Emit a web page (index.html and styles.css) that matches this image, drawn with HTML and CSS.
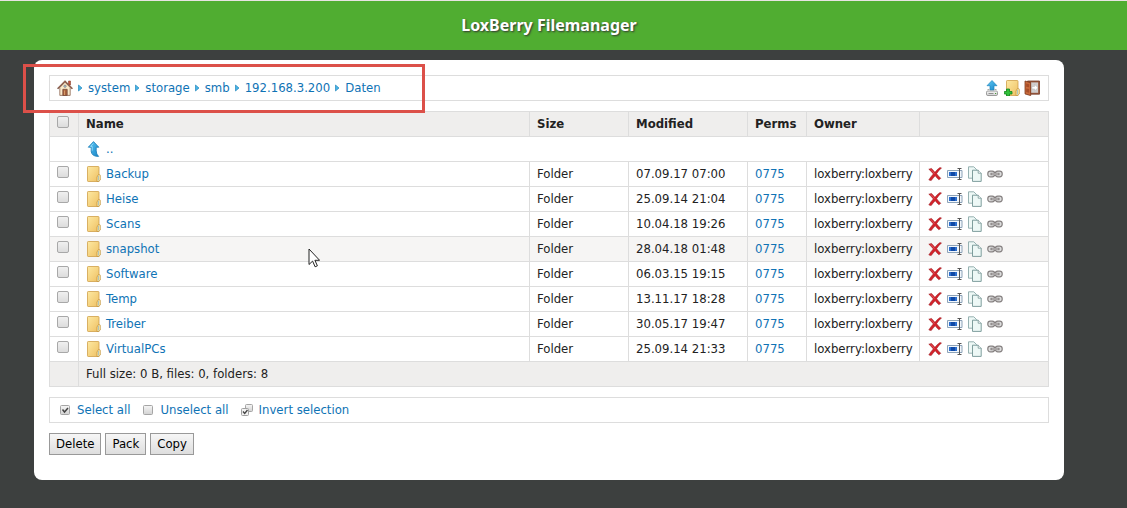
FILE: index.html
```html
<!DOCTYPE html>
<html lang="en">
<head>
  <meta charset="UTF-8">
  <meta name="viewport" content="width=device-width, initial-scale=1.0">
  <title>LoxBerry Filemanager</title>
  <link rel="stylesheet" href="styles.css">
</head>
<body>
  <!-- icon set -->
  <svg class="sprite" aria-hidden="true">
    <defs>
      <linearGradient id="g-folder" x1="0" y1="0" x2="1" y2="1">
        <stop offset="0" stop-color="#fde9a2"/><stop offset="1" stop-color="#efc062"/>
      </linearGradient>
      <linearGradient id="g-blue" x1="0" y1="0" x2="1" y2="1">
        <stop offset="0" stop-color="#5cc8f5"/><stop offset="1" stop-color="#1a86c8"/>
      </linearGradient>
      <linearGradient id="g-grey" x1="0" y1="0" x2="0" y2="1">
        <stop offset="0" stop-color="#f6f6f6"/><stop offset="1" stop-color="#d2d2d2"/>
      </linearGradient>
    </defs>
    <symbol id="home" viewBox="0 0 16 16">
      <path d="M11.5 1h2v4h-2z" fill="#c9543c" stroke="#8a4634" stroke-width=".6"/>
      <path d="M2.8 7.5L8 2.2l5.2 5.3v7.9H2.8z" fill="#faeacb" stroke="#8b6650" stroke-width=".8"/>
      <path d="M.6 8.8L8 1.3l7.4 7.5" fill="none" stroke="#6f4a3c" stroke-width="1.4"/>
      <path d="M1.2 8.2L8 1.4l6.8 6.8" fill="none" stroke="#c98a70" stroke-width=".6"/>
      <path d="M5.8 9.3h4.4v6.1H5.8z" fill="#a9623d" stroke="#6d4030" stroke-width=".7"/>
      <path d="M7 10.5h1v4.6H7z" fill="#d59a68"/>
      <circle cx="8" cy="6.2" r="1.2" fill="#9fc9e2" stroke="#7b5b4d" stroke-width=".5"/>
    </symbol>
    <symbol id="arrow" viewBox="0 0 5 8">
      <path d="M.5 1L4 4 .5 7z" fill="#49b4e6" stroke="#2588bd" stroke-width=".7"/>
    </symbol>
    <symbol id="upload" viewBox="0 0 16 16">
      <path d="M8 .5l5 5.200h-3V10H6V5.700H3z" fill="url(#g-blue)" stroke="#1e86bf" stroke-width=".7"/>
      <path d="M3.500 9.500h2M10.500 9.500h2" stroke="#aaa" stroke-width="1"/>
      <rect x="2.500" y="11" width="11" height="4.500" rx="1.300" fill="url(#g-grey)" stroke="#858585" stroke-width=".8"/>
      <path d="M4.500 13.500h5" stroke="#888" stroke-width=".9"/>
      <path d="M11 13.500h1.200" stroke="#4b9c3d" stroke-width="1"/>
    </symbol>
    <symbol id="folder" viewBox="0 0 16 16">
      <path d="M1.500 1.200q0-.7.7-.7h10.100q.7 0 .7.7v14.300H2.200q-.7 0-.7-.7z" fill="url(#g-folder)" stroke="#cfa049" stroke-width=".8"/>
      <path d="M11 15.500v-4.500l1.300-2.300h1.200q.8 0 .8.800v4.500l-1.800 1.500z" fill="#fbe7a5" stroke="#bf8f3b" stroke-width=".7"/>
      <path d="M12.500 10v4.500" stroke="#8fb6c1" stroke-width=".7"/>
    </symbol>
    <symbol id="newfolder" viewBox="0 0 16 16">
      <use href="#folder" width="16" height="16" x="1"/>
      <path d="M2.500 9h3v2.500H8v2.500H5.500v2h-3v-2H.3v-2.500h2.200z" fill="#2fc13a" stroke="#138320" stroke-width=".8"/>
    </symbol>
    <symbol id="door" viewBox="0 0 16 16">
      <path d="M3.500 1h12v13.200h-12z" fill="#9a5a3f" stroke="#743b27" stroke-width=".8"/>
      <path d="M7 2.400h7.100v10.400H7z" fill="#d0cece"/>
      <path d="M1 1l5.700 1.700v12.900L1 13.900z" fill="#c86a3b" stroke="#7b3a20" stroke-width=".8"/>
      <path d="M2.200 3.500l2.900.8v3l-2.900-.5zM2.200 8.500l2.900.5v3.700l-2.900-.8z" fill="#a84e29"/>
      <path d="M8 6.500h2.500V4.400L14 7.700 10.500 11V8.900H8z" fill="#fff" stroke="#aaa" stroke-width=".4"/>
    </symbol>
    <symbol id="up" viewBox="0 0 16 16">
      <path d="M7.500.6l5.300 5.600h-2.600v3.600q0 3.600 2.400 5.600-6.900.2-7.400-5.100V6.200H2.300z" fill="url(#g-blue)" stroke="#1479b5" stroke-width=".8"/>
      <path d="M7.300 2.500L4.600 5.400h1.600v4.300" fill="none" stroke="#a5e2fb" stroke-width=".8"/>
    </symbol>
    <symbol id="delete" viewBox="0 0 16 16">
      <path d="M1.800 3.200L4.500 2.400q1.500 1.400 3.400 3.900 2.500-3.300 5-4.700l1.600.3q-2.800 2.500-4.900 5.800 1.800 2.400 4.200 4.600l-1.900 1.500q-1.800-1.500-3.700-4-2.200 2.300-4 4.800l-2.400-.7q1.800-3 4.500-6-2-2.700-4.500-4.700z" fill="#d3222a" stroke="#941219" stroke-width=".5"/>
      <path d="M3.800 3.400q2 2 3.600 4.400" fill="none" stroke="#f0757a" stroke-width=".6"/>
    </symbol>
    <symbol id="rename" viewBox="0 0 16 16">
      <path d="M.5 4.500h14.500v7H.5z" fill="#f2f7fc" stroke="#8da3b8"/>
      <path d="M2 6h8v4H2z" fill="#2b6fd0"/>
      <path d="M4 6h4v4H4z" fill="#0f49a6"/>
      <path d="M12.500 3v10M10.500 2.500h4M10.500 13.500h4" fill="none" stroke="#555"/>
    </symbol>
    <symbol id="copy" viewBox="0 0 16 16">
      <path d="M1.500.8h5.300l2.700 2.700v8.700h-8z" fill="#eef8f6" stroke="#8ba9a9" stroke-width=".9"/>
      <path d="M5.500 4.200h5.700l3 3v8.200H5.500z" fill="#edf8f6" stroke="#729393" stroke-width=".9"/>
      <path d="M11.200 4.200v3h3" fill="#fff" stroke="#729393" stroke-width=".8"/>
    </symbol>
    <symbol id="link" viewBox="0 0 16 16">
      <rect x=".8" y="5.200" width="6.900" height="5.600" rx="2.500" fill="#ddd" stroke="#858080" stroke-width="1.200"/>
      <rect x="8.300" y="5.200" width="6.900" height="5.600" rx="2.500" fill="#ddd" stroke="#858080" stroke-width="1.200"/>
      <path d="M3.500 8h9" stroke="#7d7878" stroke-width="2.400"/>
      <path d="M4.500 8h7" stroke="#e0dede" stroke-width=".9"/>
    </symbol>
    <symbol id="checked" viewBox="0 0 16 16">
      <rect x="3.500" y="3.500" width="9" height="9" rx="1" fill="url(#g-grey)" stroke="#a5a5a5"/>
      <path d="M5.500 7.500l2 2.500 3.500-4" fill="none" stroke="#444" stroke-width="1.500"/>
    </symbol>
    <symbol id="unchecked" viewBox="0 0 16 16">
      <rect x="3.500" y="3.500" width="9" height="9" rx="1" fill="url(#g-grey)" stroke="#a5a5a5"/>
    </symbol>
    <symbol id="invert" viewBox="0 0 16 16">
      <rect x="6.500" y="2.500" width="7" height="7" rx="1" fill="url(#g-grey)" stroke="#a5a5a5"/>
      <rect x="2.500" y="6.500" width="7" height="7" rx="1" fill="#f2f2f2" stroke="#a0a0a0"/>
      <path d="M4 9.500l1.700 2L8.500 8" fill="none" stroke="#444" stroke-width="1.300"/>
    </symbol>
  </svg>

  <header class="header">
    <h1>LoxBerry Filemanager</h1>
  </header>

  <main class="card">
    <div class="bar">
      <nav class="crumbs">
        <a href="#" aria-label="Home"><svg class="icon"><use href="#home"/></svg></a>
        <svg class="sep"><use href="#arrow"/></svg>
        <a href="#">system</a>
        <svg class="sep"><use href="#arrow"/></svg>
        <a href="#">storage</a>
        <svg class="sep"><use href="#arrow"/></svg>
        <a href="#">smb</a>
        <svg class="sep"><use href="#arrow"/></svg>
        <a href="#">192.168.3.200</a>
        <svg class="sep"><use href="#arrow"/></svg>
        <a href="#">Daten</a>
      </nav>
      <div class="tools">
        <a href="#" aria-label="Upload"><svg class="icon"><use href="#upload"/></svg></a>
        <a href="#" aria-label="New folder"><svg class="icon"><use href="#newfolder"/></svg></a>
        <a href="#" aria-label="Logout"><svg class="icon"><use href="#door"/></svg></a>
      </div>
    </div>

    <form onsubmit="return false">
      <table class="files">
        <colgroup>
          <col class="col-check"><col><col class="col-size"><col class="col-modified">
          <col class="col-perms"><col class="col-owner"><col class="col-actions">
        </colgroup>
        <thead>
          <tr>
            <th class="check"><input type="checkbox" id="check-all" aria-label="Select all files"></th>
            <th>Name</th>
            <th>Size</th>
            <th>Modified</th>
            <th>Perms</th>
            <th>Owner</th>
            <th></th>
          </tr>
        </thead>
        <tbody id="file-rows">
          <tr>
            <td></td>
            <td colspan="6"><a class="name" href="#"><svg class="icon"><use href="#up"/></svg>..</a></td>
          </tr>
        </tbody>
        <tfoot>
          <tr>
            <td></td>
            <td colspan="6">Full size: 0 B, files: 0, folders: 8</td>
          </tr>
        </tfoot>
      </table>

      <div class="bar selection">
        <a href="#" onclick="setAll(true)"><svg class="icon"><use href="#checked"/></svg>Select all</a>
        <a href="#" onclick="setAll(false)"><svg class="icon"><use href="#unchecked"/></svg>Unselect all</a>
        <a href="#" onclick="invertAll()"><svg class="icon"><use href="#invert"/></svg>Invert selection</a>
      </div>

      <div class="buttons">
        <button type="submit">Delete</button>
        <button type="submit">Pack</button>
        <button type="submit">Copy</button>
      </div>
    </form>
  </main>

  <div class="highlight"></div>
  <svg class="cursor" viewBox="0 0 12 20" aria-hidden="true">
    <path d="M1 1v15.500l3.600-3.400 2.500 5.700 2.300-1-2.500-5.500h4.700z" fill="#fff" stroke="#222"/>
  </svg>

  <script src="script.js"></script>
</body>
</html>
```
FILE: styles.css
```css
* {
  box-sizing: border-box;
}

body {
  margin: 0;
  background-color: #3d403f;
  color: #222;
  font-family: "DejaVu Sans Condensed", "Noto Sans", sans-serif;
  font-size: 13px;
  line-height: 16px;
}

a {
  color: #0f73b5;
  text-decoration: none;
}

.sprite {
  position: absolute;
  width: 0;
  height: 0;
}

.icon {
  display: block;
  flex: none;
  width: 16px;
  height: 16px;
}

.header {
  height: 50px;
  padding: 12px 29px 0 0;
  border-top: 1px solid #e8e3e1;
  background-color: #50ad31;
  text-align: center;
}

.header h1 {
  margin: 0;
  color: #fff;
  font-family: "Noto Sans", sans-serif;
  font-size: 16px;
  line-height: 24px;
  text-shadow: 1px 1px 2px #333;
}

.card {
  margin: 10px 63px 28px 34px;
  padding: 15px 15px 25px;
  border-radius: 8px;
  background-color: #fff;
}

.bar {
  display: flex;
  align-items: center;
  justify-content: space-between;
  height: 26px;
  padding: 0 8px 0 7px;
  border: 1px solid #ddd;
}

.crumbs {
  display: flex;
  align-items: center;
  gap: 5px;
}

.sep {
  width: 5px;
  height: 8px;
}

.tools {
  display: flex;
  gap: 4px;
}

/* file list */
.files {
  width: 100%;
  margin: 10px 0;
  border-collapse: collapse;
  table-layout: fixed;
}

.files th,
.files td {
  height: 25px;
  padding: 0 7px;
  border: 1px solid #ddd;
  text-align: left;
  white-space: nowrap;
}

.files thead,
.files tfoot {
  background-color: #efeeed;
}

.files tbody tr.active,
.files tbody tr:hover {
  background-color: #f6f5f4;
}

.col-check {
  width: 29px;
}

.col-size {
  width: 99px;
}

.col-modified {
  width: 119px;
}

.col-perms {
  width: 59px;
}

.col-owner {
  width: 113px;
}

.col-actions {
  width: 129px;
}

.files .check {
  vertical-align: top;
}

.check input {
  display: block;
  appearance: none;
  width: 12px;
  height: 12px;
  margin: 4px 0 0;
  border: 1px solid #a8a8a8;
  border-radius: 2px;
  background: linear-gradient(#f0f0f0, #dcdcdc);
}

.check input:checked {
  background: #777;
}

.name {
  display: flex;
  align-items: center;
  gap: 4px;
}

.actions {
  display: flex;
  gap: 4px;
}

.selection {
  justify-content: flex-start;
  gap: 10px;
}

.selection a {
  display: flex;
  gap: 4px;
}

.buttons {
  display: flex;
  gap: 4px;
  margin-top: 10px;
}

.buttons button {
  height: 22px;
  padding: 0 6px;
  border: 1px solid #999;
  background: linear-gradient(#f6f6f6, #dedede);
  color: #000;
  font: inherit;
}

/* marker and pointer lying over the page */
.highlight {
  position: absolute;
  top: 64px;
  left: 23px;
  width: 402px;
  height: 49px;
  border: 3px solid #dc5049;
  pointer-events: none;
}

.cursor {
  position: absolute;
  top: 248px;
  left: 308px;
  width: 12px;
  height: 20px;
  pointer-events: none;
}
```
FILE: script.js
```js
const folders = [
  ['Backup', '07.09.17 07:00'],
  ['Heise', '25.09.14 21:04'],
  ['Scans', '10.04.18 19:26'],
  ['snapshot', '28.04.18 01:48'],
  ['Software', '06.03.15 19:15'],
  ['Temp', '13.11.17 18:28'],
  ['Treiber', '30.05.17 19:47'],
  ['VirtualPCs', '25.09.14 21:33']
];

const actions = ['delete', 'rename', 'copy', 'link'];

function icon(id) {
  return `<svg class="icon"><use href="#${id}"/></svg>`;
}

function renderRow([name, modified]) {
  const links = actions.map(a => `<a href="#" aria-label="${a} ${name}">${icon(a)}</a>`).join('');
  return `<tr class="${name === 'snapshot' ? 'active' : ''}">
    <td class="check"><input type="checkbox" aria-label="${name}"></td>
    <td><a class="name" href="#">${icon('folder')}${name}</a></td>
    <td>Folder</td>
    <td>${modified}</td>
    <td><a href="#">0775</a></td>
    <td>loxberry:loxberry</td>
    <td><div class="actions">${links}</div></td>
  </tr>`;
}

document.getElementById('file-rows').insertAdjacentHTML('beforeend', folders.map(renderRow).join(''));

function boxes() {
  return document.querySelectorAll('#file-rows input');
}

function setAll(value) {
  boxes().forEach(box => box.checked = value);
}

function invertAll() {
  boxes().forEach(box => box.checked = !box.checked);
}

document.getElementById('check-all').addEventListener('change', e => setAll(e.target.checked));
```
